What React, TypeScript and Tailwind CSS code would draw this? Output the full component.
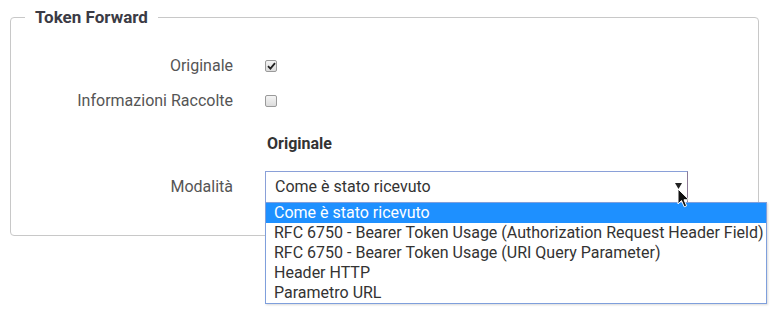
import React from "react";

const items = [
  "Come è stato ricevuto",
  "RFC 6750 - Bearer Token Usage (Authorization Request Header Field)",
  "RFC 6750 - Bearer Token Usage (URI Query Parameter)",
  "Header HTTP",
  "Parametro URL",
];

function Check({ checked }: { checked?: boolean }) {
  return (
    <span className="flex h-[12px] w-[12px] items-center justify-center rounded-[2px] border border-[#9a9a9a] bg-gradient-to-b from-[#f4f4f4] to-[#dcdcdc]">
      {checked && (
        <svg width="9" height="8" viewBox="0 0 9 8">
          <path d="M1 4.2 L3.4 6.6 L8 1.2" stroke="#222" strokeWidth="1.8" fill="none" />
        </svg>
      )}
    </span>
  );
}

export default function App() {
  return (
    <div
      className="relative h-[329px] w-[773px] bg-white pl-[10px] pt-[8px]"
      style={{ fontFamily: "Roboto, 'Liberation Sans', sans-serif" }}
    >
      <fieldset className="w-[749px] rounded-[4px] border border-[#c8c8c8] pb-[32px]">
        <legend className="ml-[14px] px-[10px] text-[17px] font-bold leading-[18px] text-[#3b3b45]">
          Token Forward
        </legend>
        <div className="mt-[30px] flex h-[20px] items-center">
          <div className="w-[222px] text-right text-[16px] text-[#555]">Originale</div>
          <div className="ml-[32px]">
            <Check checked />
          </div>
        </div>
        <div className="mt-[15px] flex h-[20px] items-center">
          <div className="w-[222px] text-right text-[16px] text-[#555]">Informazioni Raccolte</div>
          <div className="ml-[32px]">
            <Check />
          </div>
        </div>
        <div className="mt-[23px] flex h-[20px] items-center">
          <div className="ml-[256px] text-[16px] font-bold text-[#333]">Originale</div>
        </div>
        <div className="mt-[17px] flex h-[32px] items-center">
          <div className="w-[222px] text-right text-[16px] text-[#555]">Modalità</div>
          <div className="relative ml-[32px] flex h-[32px] w-[423px] items-center border border-b-[#8c7a96] border-l-[#8aa0d8] border-r-[#8c7a96] border-t-[#8aa0d8] bg-white pl-[9px] text-[16px] text-[#333]">
            Come è stato ricevuto
            <svg className="absolute left-[409px] top-[11px]" width="7" height="6" viewBox="0 0 7 6">
              <path d="M0 0 H7 L3.5 6 Z" fill="#222" />
            </svg>
          </div>
        </div>
      </fieldset>

      <div className="absolute left-[265px] top-[202px] w-[502px] border border-[#7f9fdc] bg-white py-0 shadow-[1px_1px_2px_rgba(0,0,0,0.15)]">
        {items.map((t, i) => (
          <div
            key={t}
            className={
              i === 0
                ? "h-[20px] bg-[#1e90ff] pl-[8px] text-[16px] leading-[20px] text-white"
                : "h-[20px] pl-[8px] text-[16px] leading-[20px] text-[#333]"
            }
          >
            {t}
          </div>
        ))}
      </div>

      <svg className="absolute left-[677px] top-[188px]" width="14" height="21" viewBox="0 0 14 21">
        <path
          d="M1 1 L1 16 L4.5 12.6 L7.2 18.8 L9.6 17.8 L7 11.8 L12 11.8 Z"
          fill="#111"
          stroke="#fff"
          strokeWidth="1"
          strokeLinejoin="round"
        />
      </svg>
    </div>
  );
}
